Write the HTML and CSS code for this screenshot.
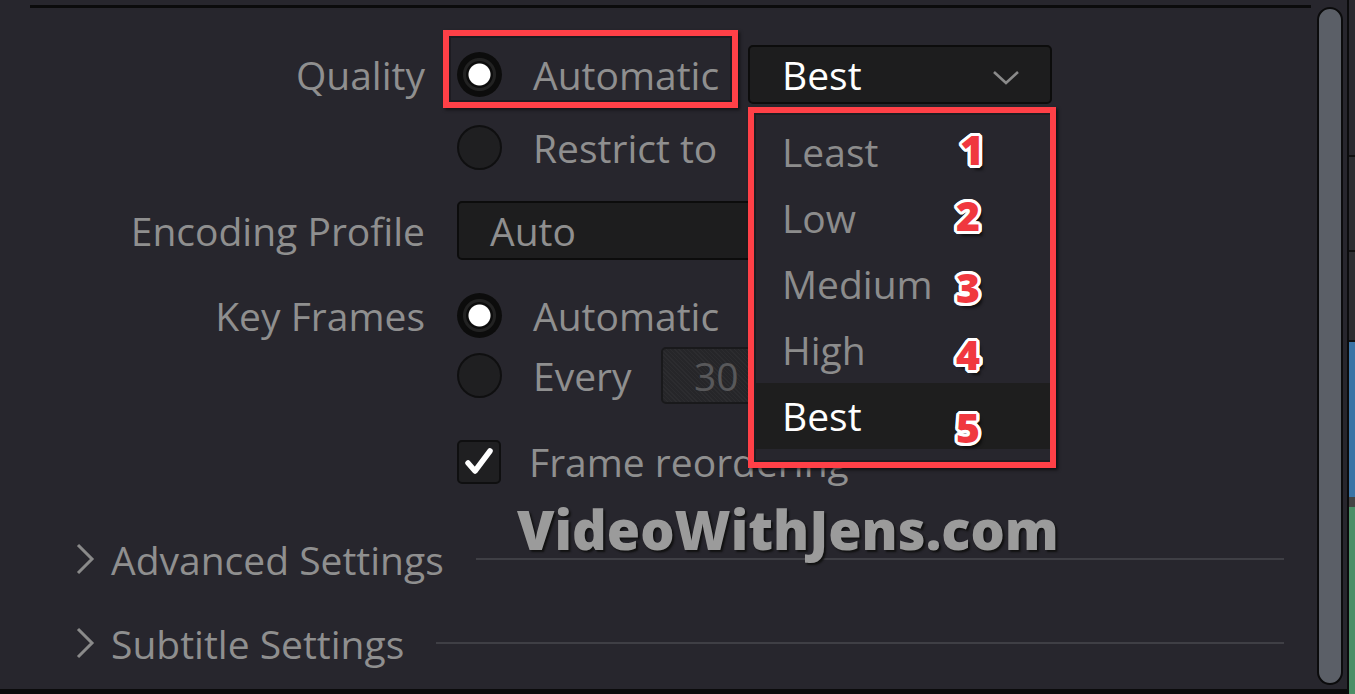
FILE: index.html
```html
<!DOCTYPE html>
<html lang="en">
<head>
<meta charset="utf-8">
<title>Render Settings</title>
<link rel="stylesheet" href="styles.css">
</head>
<body>
<div class="app">
  <main class="panel">
    <div class="topline"></div>
    <div class="form">
      <div class="row row-q">
        <div class="label">Quality</div>
        <div class="ctrl">
          <div class="opt opt-hl"><span class="radio on"></span><span class="opt-text">Automatic</span></div>
          <div class="dd-wrap">
            <div class="dropdown">
              <span class="dd-value">Best</span>
              <svg class="chev" width="28" height="16" viewBox="0 0 28 16"><polyline points="2,3 14,14 26,3" fill="none" stroke="#8a8a8a" stroke-width="2.6"/></svg>
            </div>
            <div class="menu">
              <div class="menu-inner">
                <div class="item"><span>Least</span><b class="num n1">1</b></div>
                <div class="item"><span>Low</span><b class="num n2">2</b></div>
                <div class="item"><span>Medium</span><b class="num n3">3</b></div>
                <div class="item"><span>High</span><b class="num n4">4</b></div>
                <div class="item sel"><span>Best</span><b class="num n5">5</b></div>
              </div>
            </div>
          </div>
        </div>
      </div>
      <div class="row row-r">
        <div class="label"></div>
        <div class="ctrl">
          <div class="opt"><span class="radio"></span><span class="opt-text">Restrict to</span></div>
        </div>
      </div>
      <div class="row row-e">
        <div class="label">Encoding Profile</div>
        <div class="ctrl">
          <div class="field wide"><span>Auto</span></div>
        </div>
      </div>
      <div class="row row-k">
        <div class="label">Key Frames</div>
        <div class="ctrl">
          <div class="opt"><span class="radio on"></span><span class="opt-text">Automatic</span></div>
        </div>
      </div>
      <div class="row row-every">
        <div class="label"></div>
        <div class="ctrl">
          <div class="opt"><span class="radio"></span><span class="opt-text">Every</span></div>
          <div class="field small"><span>30</span></div>
        </div>
      </div>
      <div class="row row-check">
        <div class="label"></div>
        <div class="ctrl">
          <span class="checkbox"><svg width="32" height="32" viewBox="0 0 32 32"><polyline points="5,17 12,25 27,5" fill="none" stroke="#fff" stroke-width="5.5" stroke-linecap="round" stroke-linejoin="round"/></svg></span>
          <span class="check-text">Frame reordering</span>
        </div>
      </div>
      <div class="section sec-adv">
        <svg class="sec-chev" width="20" height="32" viewBox="0 0 20 32"><polyline points="3,2 17,16 3,30" fill="none" stroke="#8a8a8a" stroke-width="3"/></svg>
        <span class="sec-title">Advanced Settings</span>
        <span class="sec-line"></span>
      </div>
      <div class="section sec-sub">
        <svg class="sec-chev" width="20" height="32" viewBox="0 0 20 32"><polyline points="3,2 17,16 3,30" fill="none" stroke="#8a8a8a" stroke-width="3"/></svg>
        <span class="sec-title">Subtitle Settings</span>
        <span class="sec-line"></span>
      </div>
    </div>
    <div class="watermark">VideoWithJens.com</div>
    <div class="bottomline"></div>
  </main>
  <div class="scrolltrack"><div class="thumb"></div></div>
  <div class="strip">
    <div class="s1"></div><div class="s2"></div><div class="s3"></div><div class="s4"></div><div class="s5"></div><div class="s6"></div>
  </div>
</div>
</body>
</html>
```
FILE: styles.css
```css
*, *::before, *::after { box-sizing: border-box; }
html, body { margin: 0; padding: 0; }
body {
  width: 1355px;
  height: 694px;
  overflow: hidden;
  background: #27262d;
  font-family: "Open Sans", "Liberation Sans", sans-serif;
  font-size: 39px;
  color: #8f8f8f;
}
.app { display: flex; height: 694px; }
.panel {
  position: relative;
  width: 1315px;
  display: flex;
  flex-direction: column;
}
.topline {
  margin: 5px 0 0 30px;
  width: 1281px;
  height: 3px;
  background: #0b0b0c;
}
.form { display: flex; flex-direction: column; }
.row {
  display: grid;
  grid-template-columns: 425px 1fr;
  column-gap: 32px;
  align-items: center;
}
.label { text-align: right; white-space: nowrap; }
.ctrl { display: flex; align-items: center; }
.row-q { margin-top: 36px; height: 60px; }
.row-r { margin-top: 13px; height: 60px; }
.row-e { margin-top: 23px; height: 60px; }
.row-k { margin-top: 25px; height: 60px; }
.row-every { margin-top: 1px; height: 58px; }
.row-check { margin-top: 31px; height: 44px; }

.opt { display: flex; align-items: center; gap: 31px; width: 291px; position: relative; white-space: nowrap; }
.opt-hl::before {
  content: "";
  position: absolute;
  left: -14px; top: -18px;
  width: 295px; height: 78px;
  border: 6px solid #ff4047;
  box-shadow: inset 0 0 0 2px #1d1c22, 2px 2px 3px rgba(0,0,0,0.5);
}
.radio {
  width: 45px; height: 45px;
  border-radius: 50%;
  background: #1f1f21;
  border: 2px solid #0f0f10;
  flex: none;
}
.radio.on {
  background: radial-gradient(circle, #fff 0 10.5px, #0c0c0c 11.5px 13px, #222 14px 16px, #0c0c0c 17px);
  border: none;
}
.dd-wrap { position: relative; }
.dropdown {
  width: 304px; height: 59px;
  background: #1d1d1e;
  border: 2px solid #0c0c0c;
  border-radius: 5px;
  display: flex; align-items: center; justify-content: space-between;
  padding: 0 30px 0 32px;
  color: #fff;
}
.chev { margin-top: 6px; }
.menu {
  position: absolute;
  left: 0; top: 62px;
  width: 308px; height: 361px;
  border: 6px solid #ff4047;
  box-shadow: 2px 2px 3px rgba(0,0,0,0.6);
  z-index: 5;
  background: #27262d;
}
.menu-inner {
  height: 100%;
  border: 2px solid #1e1d22;
  border-right: none;
  padding-top: 4px;
}
.item {
  position: relative;
  height: 66px;
  display: flex; align-items: center;
  padding-left: 26px;
  color: #8c8c8c;
}
.item.sel { background: #1e1e1e; color: #fff; }
.num {
  position: absolute;
  left: 200px;
  font-family: "Open Sans", "Liberation Sans", sans-serif;
  font-weight: 800;
  font-size: 41px;
  line-height: 1;
  color: #f0383f;
  text-shadow:
    3px 0 0 #fff, -3px 0 0 #fff, 0 3px 0 #fff, 0 -3px 0 #fff,
    2px 2px 0 #fff, -2px 2px 0 #fff, 2px -2px 0 #fff, -2px -2px 0 #fff,
    3px 1px 0 #fff, -3px 1px 0 #fff, 3px -1px 0 #fff, -3px -1px 0 #fff,
    1px 3px 0 #fff, -1px 3px 0 #fff, 1px -3px 0 #fff, -1px -3px 0 #fff,
    4px 5px 3px rgba(0,0,0,0.6);
}
.n1 { top: 10px; left: 204px; }
.n2 { top: 10px; }
.n3 { top: 16px; }
.n4 { top: 17px; }
.n5 { top: 24px; }

.field {
  height: 59px;
  background: #1d1d1e;
  border: 2px solid #0c0c0c;
  border-radius: 5px;
  display: flex; align-items: center;
  padding-left: 31px;
}
.field.wide { width: 420px; color: #8f8f8f; }
.field.small {
  width: 130px; height: 57px;
  margin-left: -87px;
  background: repeating-linear-gradient(45deg, #2c2c2f 0 1px, #262629 1px 3px);
  border-color: #19191b;
  color: #58585a;
}
.checkbox {
  width: 44px; height: 44px;
  background: #1f1f21;
  border: 2px solid #0f0f10;
  border-radius: 5px;
  display: flex; align-items: center; justify-content: center;
  flex: none;
}
.check-text { margin-left: 28px; white-space: nowrap; }

.section {
  display: flex; align-items: center;
  height: 40px;
  padding-left: 75px;
  margin-right: 31px;
}
.sec-adv { margin-top: 60px; }
.sec-sub { margin-top: 44px; }
.sec-chev { flex: none; margin-right: 16px; }
.sec-title { white-space: nowrap; }
.sec-line { flex: 1; height: 2px; background: #3f3f45; margin-left: 32px; margin-top: 0; }

.watermark {
  position: absolute;
  left: 517px; top: 492px;
  font-family: "Open Sans", "Liberation Sans", sans-serif;
  font-weight: 800;
  font-size: 54px;
  color: #9b9b9b;
  text-shadow: 2px 2px 2px #111;
  white-space: nowrap;
  z-index: 6;
}
.bottomline {
  position: absolute;
  left: 0; bottom: 0;
  width: 1315px; height: 5px;
  background: #0b0b0c;
}
.scrolltrack {
  width: 32px;
  padding: 7px 4px 4px 2px;
  background: #27262d;
  border-bottom: 5px solid #0b0b0c;
}
.thumb {
  height: 100%;
  background: #5b5f67;
  border: 2px solid #0b0b0c;
  border-radius: 13px;
}
.strip {
  width: 8px;
  border-left: 2px solid #0b0b0c;
  display: flex; flex-direction: column;
}
.s1 { height: 157px; background: #2b2a30; border-bottom: 2px solid #111; }
.s2 { height: 95px; background: #2e2e32; border-bottom: 2px solid #111; }
.s3 { height: 90px; background: #2e2e32; border-bottom: 2px solid #111; }
.s4 { height: 155px; background: #3b74a6; }
.s5 { height: 10px; background: #444; }
.s6 { flex: 1; background: #4b8f67; }
```
